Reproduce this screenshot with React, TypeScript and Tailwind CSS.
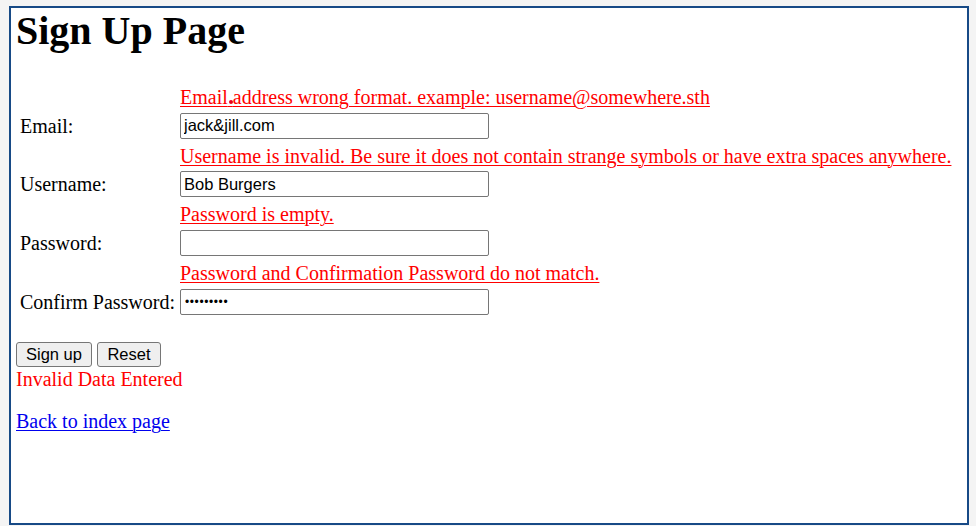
import React from 'react';

const serif = { fontFamily: '"Liberation Serif", "Times New Roman", serif' };

type Field = {
  label: string;
  error: React.ReactNode;
  value: string;
  password?: boolean;
};

const fields: Field[] = [
  {
    label: 'Email:',
    error: (
      <>
        Email
        <span className="relative">
          {' '}
          <span className="absolute left-[1px] top-[14px] h-[4px] w-[4px] rounded-full bg-[#e8001a]" />
        </span>
        address wrong format. example: username@somewhere.sth
      </>
    ),
    value: 'jack&jill.com',
  },
  {
    label: 'Username:',
    error: 'Username is invalid. Be sure it does not contain strange symbols or have extra spaces anywhere.',
    value: 'Bob Burgers',
  },
  {
    label: 'Password:',
    error: 'Password is empty.',
    value: '',
  },
  {
    label: 'Confirm Password:',
    error: 'Password and Confirmation Password do not match.',
    value: '•••••••••',
    password: true,
  },
];

export default function App() {
  return (
    <div className="h-[526px] w-[976px] overflow-hidden bg-[#f4f4f4] pl-[9px] pt-[6px]">
      <div
        className="h-[519px] w-[960px] border-2 border-[#174a86] bg-white px-[5px] text-black"
        style={serif}
      >
        {/* Heading */}
        <h1 className="mt-[1px] text-[40px] font-bold leading-[44px]">Sign Up Page</h1>

        {/* Form rows */}
        <form className="mt-[28px]" onSubmit={(e) => e.preventDefault()}>
          <div className="grid grid-cols-[160px_auto] gap-y-[2.85px] py-[2.85px] pl-[4px]">
            {fields.map((field) => (
              <React.Fragment key={field.label}>
                <div className="h-[25px]" />
                <div className="flex h-[25px] items-center pt-[1px] text-[20px] leading-[22px] text-[#ff0000] underline decoration-1 underline-offset-[2px]">
                  <span>{field.error}</span>
                </div>
                <div className="flex h-[28px] items-center text-[20px] leading-[22px]">
                  {field.label}
                </div>
                <div className="flex h-[28px] items-center">
                  <input
                    type="text"
                    readOnly
                    value={field.value}
                    className={
                      field.password
                        ? 'h-[26px] w-[309px] rounded-[2px] border border-[#767676] bg-white pl-[4px] text-[12px] tracking-[0.6px] text-black outline-none'
                        : 'h-[26px] w-[309px] rounded-[2px] border border-[#767676] bg-white pl-[3px] text-[16.5px] text-black outline-none'
                    }
                    style={{ fontFamily: '"Liberation Sans", Arial, sans-serif' }}
                  />
                </div>
              </React.Fragment>
            ))}
          </div>

          {/* Buttons */}
          <div
            className="mt-[23px] flex h-[25px] gap-[5px]"
            style={{ fontFamily: '"Liberation Sans", Arial, sans-serif' }}
          >
            <button
              type="submit"
              className="h-[25px] w-[76px] rounded-[3px] border border-[#767676] bg-[#efefef] text-[16.5px] leading-none text-black"
            >
              Sign up
            </button>
            <button
              type="reset"
              className="h-[25px] w-[64px] rounded-[3px] border border-[#767676] bg-[#efefef] text-[16.5px] leading-none text-black"
            >
              Reset
            </button>
          </div>
        </form>

        <div className="mt-[1px] text-[20px] leading-[22px] text-[#ff0000]">Invalid Data Entered</div>

        <a href="#" className="mt-[20px] inline-block text-[20px] leading-[22px] text-[#0000ee] underline decoration-1 underline-offset-[2px]">
          Back to index page
        </a>
      </div>
    </div>
  );
}
